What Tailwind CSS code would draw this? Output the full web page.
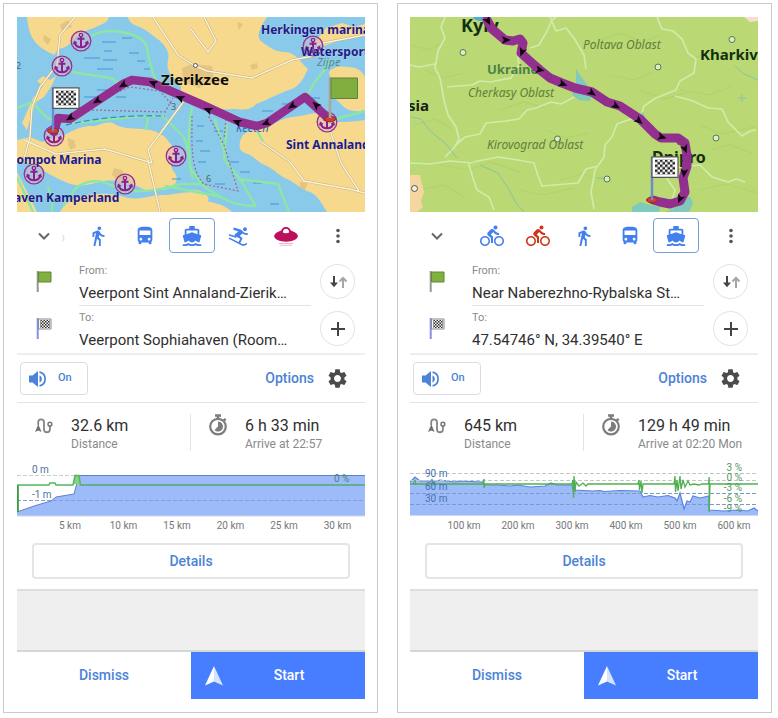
<!DOCTYPE html>
<html lang="en">
<head>
<meta charset="utf-8">
<meta name="viewport" content="width=device-width, initial-scale=1">
<title>Boat routes</title>
<script src="https://cdn.jsdelivr.net/npm/@tailwindcss/browser@4"></script>
</head>
<body class="bg-white font-[Roboto,sans-serif] text-[#303030]">

<!-- Shared icons -->
<svg class="absolute size-0" aria-hidden="true">
  <defs>
    <pattern id="check-small" width="3" height="3" patternUnits="userSpaceOnUse"><path d="M0 0h1.500v1.500H0zM1.500 1.500H3V3H1.500z" fill="#333"/></pattern>
    <pattern id="check-big" width="5" height="5" patternUnits="userSpaceOnUse"><path d="M0 0h2.500v2.500H0zM2.500 2.500H5V5H2.500z" fill="#222"/></pattern>
  </defs>
  <symbol id="walk" viewBox="0 0 24 24"><path d="M13.5 5.5c1.1 0 2-.9 2-2s-.9-2-2-2-2 .9-2 2 .9 2 2 2zM9.8 8.9L7 23h2.1l1.8-8 2.1 2v6h2v-7.5l-2.1-2 .6-3C14.8 12 16.8 13 19 13v-2c-1.9 0-3.5-1-4.3-2.4l-1-1.6c-.4-.6-1-1-1.7-1-.3 0-.5.1-.8.1L6 8.3V13h2V9.6l1.8-.7"/></symbol>
  <symbol id="bus" viewBox="0 0 24 24"><path d="M4 16c0 .88.39 1.67 1 2.22V20c0 .55.45 1 1 1h1c.55 0 1-.45 1-1v-1h8v1c0 .55.45 1 1 1h1c.55 0 1-.45 1-1v-1.78c.61-.55 1-1.34 1-2.22V6c0-3.5-3.58-4-8-4s-8 .5-8 4v10zm3.5 1c-.83 0-1.5-.67-1.5-1.5S6.67 14 7.5 14s1.5.67 1.5 1.5S8.33 17 7.5 17zm9 0c-.83 0-1.5-.67-1.5-1.5s.67-1.5 1.5-1.5 1.5.67 1.5 1.5-.67 1.5-1.5 1.5zm1.5-6H6V6h12v5z"/></symbol>
  <symbol id="boat" viewBox="0 0 24 24"><path d="M20 21c-1.39 0-2.78-.47-4-1.32-2.44 1.71-5.56 1.71-8 0C6.78 20.53 5.39 21 4 21H2v2h2c1.38 0 2.74-.35 4-.99 2.52 1.29 5.48 1.29 8 0 1.26.65 2.62.99 4 .99h2v-2h-2zM3.95 19H4c1.6 0 3.02-.88 4-2 .98 1.12 2.4 2 4 2s3.02-.88 4-2c.98 1.12 2.4 2 4 2h.05l1.89-6.68c.08-.26.06-.54-.06-.78s-.34-.42-.6-.5L20 10.62V6c0-1.1-.9-2-2-2h-3V1H9v3H6c-1.1 0-2 .9-2 2v4.62l-1.29.42c-.26.08-.48.26-.6.5s-.15.52-.06.78L3.95 19zM6 6h12v3.97L12 8 6 9.97V6z"/></symbol>
  <symbol id="bike" viewBox="0 0 24 24"><path d="M15.5 5.5c1.1 0 2-.9 2-2s-.9-2-2-2-2 .9-2 2 .9 2 2 2zM5 12c-2.8 0-5 2.2-5 5s2.2 5 5 5 5-2.2 5-5-2.2-5-5-5zm0 8.5c-1.9 0-3.5-1.6-3.5-3.5s1.6-3.5 3.5-3.5 3.5 1.6 3.5 3.5-1.6 3.5-3.5 3.5zm5.8-10l2.4-2.4.8.8c1.3 1.3 3 2.1 5.1 2.1V9c-1.5 0-2.7-.6-3.6-1.5l-1.9-1.9c-.5-.4-1-.6-1.6-.6s-1.1.2-1.4.6L7.8 8.4c-.4.4-.6.9-.6 1.4 0 .6.2 1.1.6 1.4L11 14v5h2v-6.2l-2.2-2.3zM19 12c-2.8 0-5 2.2-5 5s2.2 5 5 5 5-2.2 5-5-2.2-5-5-5zm0 8.5c-1.9 0-3.5-1.6-3.5-3.5s1.6-3.5 3.5-3.5 3.5 1.6 3.5 3.5-1.6 3.5-3.5 3.5z"/></symbol>
  <symbol id="ski" viewBox="0 0 24 24"><circle cx="18.500" cy="4.600" r="2.100"/><path d="M6.300 2.800l8.200 2.500 2.300 2.400c1 1 2.400 1.400 5 1.200v1.800c-2.900.3-4.600-.2-5.800-1.300l-3.300 2.400 3.200 2.600-2.700 5.400-1.900-.8 2-4-5.300-2.900c-.9-.5-1-1.600-.2-2.300l3.600-2.800-5.600-1.800z"/><path d="M1.700 14.600l13.100 6.600c1.800.8 3.700.6 5.200-.6M1.600 10.900l7 2.200" fill="none" stroke="currentColor" stroke-width="1.700" stroke-linecap="round"/></symbol>
  <symbol id="ufo" viewBox="0 0 24 24"><path d="M6.800 10C6.800 5.500 8.800 3 12 3s5.200 2.500 5.200 7z"/><path d="M7.500 6.500C3 7.900.2 9.800.2 12.300c0 3 5.300 5.400 11.800 5.400s11.800-2.400 11.800-5.400c0-2.500-2.800-4.400-7.300-5.800z"/><path d="M8.800 8.500c.2-2.500 1.300-3.700 3.200-3.700s3 1.200 3.200 3.700c-1.900.9-4.500.9-6.400 0z" fill="#fff"/><path d="M5 19h14v1H5zm1 1.700h12v1H6z" opacity=".3"/></symbol>
  <symbol id="gear" viewBox="0 0 24 24"><path d="M19.140 12.940c.04-.3.06-.61.06-.94 0-.32-.02-.64-.07-.94l2.030-1.580c.18-.14.23-.41.12-.61l-1.920-3.320c-.12-.22-.37-.29-.59-.22l-2.390.96c-.5-.38-1.030-.7-1.620-.94l-.36-2.540c-.04-.24-.24-.41-.48-.41h-3.840c-.24 0-.43.17-.47.41l-.36 2.540c-.59.24-1.130.57-1.620.94l-2.390-.96c-.22-.08-.47 0-.59.22L2.740 8.870c-.12.21-.08.47.12.61l2.030 1.580c-.05.3-.09.63-.09.94s.02.64.07.94l-2.030 1.580c-.18.14-.23.41-.12.61l1.920 3.320c.12.22.37.29.59.22l2.390-.96c.5.38 1.030.7 1.620.94l.36 2.540c.05.24.24.41.48.41h3.840c.24 0 .44-.17.47-.41l.36-2.540c.59-.24 1.130-.56 1.620-.94l2.390.96c.22.08.47 0 .59-.22l1.920-3.320c.12-.22.07-.47-.12-.61l-2.010-1.580zM12 15.600c-1.980 0-3.600-1.620-3.600-3.600s1.620-3.600 3.600-3.600 3.600 1.620 3.600 3.600-1.620 3.600-3.600 3.600z"/></symbol>
  <symbol id="volume" viewBox="0 0 20 18"><path d="M1 5.500v7h3.500L10 17V1L4.500 5.500z"/><path d="M11.500 5.500c1.500.6 2.300 1.900 2.300 3.500s-.8 2.900-2.300 3.500z"/><path d="M11.500 2.100c3.600.7 5.600 3.500 5.600 6.900s-2 6.200-5.600 6.900" fill="none" stroke="currentColor" stroke-width="1.700"/></symbol>
  <symbol id="chevron" viewBox="0 0 14 14"><path d="M2 4.500l5 5 5-5" fill="none" stroke="#666" stroke-width="2"/></symbol>
  <symbol id="dots" viewBox="0 0 6 16"><circle cx="3" cy="2.500" r="1.800"/><circle cx="3" cy="8" r="1.800"/><circle cx="3" cy="13.500" r="1.800"/></symbol>
  <symbol id="swap" viewBox="0 0 18 14"><path d="M5 1v9" stroke="#444" stroke-width="2"/><path d="M1 7.500h8L5 12.300z" fill="#444"/><path d="M14 13V4" stroke="#a6a6a6" stroke-width="2"/><path d="M10.500 6.500L14 3l3.500 3.500" fill="none" stroke="#a6a6a6" stroke-width="2"/></symbol>
  <symbol id="plus" viewBox="0 0 14 14"><path d="M7 0v14M0 7h14" stroke="#444" stroke-width="2"/></symbol>
  <symbol id="flag-start" viewBox="0 0 16 21"><path d="M1.700 0v21" stroke="#97958d" stroke-width="2"/><path d="M2.500 1h12.500v10H2.500z" fill="#80b040" stroke="#5b8a35"/></symbol>
  <symbol id="flag-end" viewBox="0 0 16 21"><path d="M1.700 0v21" stroke="#8490e2" stroke-width="2"/><path d="M2.500 1h12.500v10H2.500z" fill="#f6f6f6" stroke="#8b8b8b"/><path d="M4 2h10v8H4z" fill="url(#check-small)"/></symbol>
  <symbol id="distance" viewBox="0 0 18 17"><path d="M3.200 7V4.200a2.900 2.900 0 0 1 5.800 0v7.600a3 3 0 0 0 5.900 0V8" fill="none" stroke="#858585" stroke-width="1.800"/><circle cx="14.900" cy="6.200" r="1.900" fill="#fff" stroke="#777" stroke-width="1.500"/><path d="M3.300 6.200L6.600 14l-3.300-1.400L0 14z" fill="#707070"/></symbol>
  <symbol id="timer" viewBox="0 0 20 22"><path d="M7 1.500h6M10 1.500v3M15.800 4.800l1.800 1.800" fill="none" stroke="#7d7d7d" stroke-width="2.600"/><circle cx="10" cy="12.600" r="7.800" fill="#fff" stroke="#7d7d7d" stroke-width="2.200"/><path d="M10 7.600a5 5 0 1 1-3.500 8.500L10 12.600z" fill="#7d7d7d"/></symbol>
  <symbol id="navigate" viewBox="0 0 18 20"><path d="M9 0v15.500L0 19.500z" fill="#fff"/><path d="M9 0v15.500l9 4z" fill="#d5e3ff"/></symbol>
  <symbol id="anchor" viewBox="-11 -11 22 22"><circle r="9.800" fill="#d9b4ca" fill-opacity=".5" stroke="#8f3490" stroke-width="1.300"/><path d="M0-4.500V6M-3.500-2.300h7M-6.300 1.500C-5.500 5-3 6.300 0 6.300S5.500 5 6.300 1.500M-7 3.500l.6-2.500 2 1.300M7 3.500L6.400 1l-2 1.300" fill="none" stroke="#8a208c" stroke-width="2"/><circle cy="-5.900" r="1.700" fill="none" stroke="#8a208c" stroke-width="1.300"/></symbol>
  <symbol id="arrow" viewBox="-5 -5 10 10"><path d="M4.800 0L-4.200 3.900-2.200 0l-2-3.900z" fill="#130816"/></symbol>
  <symbol id="finish" viewBox="0 0 34 50"><ellipse cx="6" cy="44" rx="5.500" ry="2.700" fill="#d63c36" stroke="#86332f"/><path d="M6 1v43" stroke="#6d8bd0" stroke-width="2.400"/><path d="M6 .8h26v20.500H6z" fill="#fff" stroke="#555" stroke-width="1.200"/><path d="M0 0h20v15H0z" transform="translate(9 3.500)" fill="url(#check-big)"/></symbol>
</svg>

<main class="grid grid-cols-2 items-start gap-[19px] pt-[3px] pr-[6px] pb-[5px] pl-[3px]">

  <!-- Route 1 -->
  <section class="border border-[#c9c9c9] pt-[13px] pr-[12px] pb-[13px] pl-[13px]">
    <svg class="block h-auto w-full" viewBox="17 17 348 195" role="img" aria-label="Map of the route to Sophiahaven">
      <path fill="#89caeb" d="M17 17h348v195H17z"/>
      <g fill="#f7d98e">
        <path d="M27 17c1 10 3 20 10 27 5 5 11 8 17 11 2-3 4-6 8-7 6-1 8-5 12-9 6-8 14-8 24-13 5-2 10-4 11-9z"/>
        <path d="M128 17c1 6 6 8 12 10 8 4 12 8 19 13 7 7 11 12 9 20-2 9 2 15 8 20 3 4 6 6 5 10-3 5 2 9 10 13 12 5 24 7 42 6 12 1 18 1 23-5 8-3 18-8 30-13 14-3 18-14 22-22-10-9-13-18-25-17-9-1-14-5-21-10-7-5-2-14 5-25z"/>
        <path d="M329 72c4-6 12-6 20-5 7 1 12 2 16 10v33c-10 3-19 0-23-5-5-5-9-7-9-14z"/>
        <path d="M326 28l16-5 12 4 11-3v11l-24 5-17 6-9-4z"/>
        <path d="M243 135c8-6 21-6 29-10 7-5 16-8 28-9 9-1 15-5 22-1 11 10 28 7 43 5v92h-38c-5-7-8-16-17-20-10-3-15-10-23-13-9-4-12-9-20-13-11-4-12-10-22-13-8-3-6-12-2-18z"/>
        <path d="M17 140l13-3 12 5 15-5c14-3 17-10 33-11 10 1 12-5 23-3 8 6 18 5 29 6 14 1 22 5 27 13 7 7 7 15 3 22-3 6 8 10 4 18-5 9-15 8-23 8-12 2-15-7-28-7-10-3-16-3-25-1-10 2-17 5-30 2-10-4-24-11-31-17-7-4-15-5-22-5z"/>
        <path d="M60 212c4-8 12-14 24-16 17-4 31-2 44 2 15 2 24-4 39-3 14-2 27-6 35 4 10 5 20 3 30 13z"/>
        <path d="M190 190c8-1 15 2 18 7s-6 8-18 7zM27 130l-5-7 11-25 10-12-6-5 6-5 7 4 6-4-4 9-8 12-8 5-5 15z"/>
        <path d="M17 212v-40l8 16 12 24z"/>
      </g>
      <g fill="#dfbf7d" opacity=".8"><path d="M60 25l8-5 4 7-10 4zM44 35l7 4-3 6-5-5zM68 138l6 2 2 7-5 3-3-5zM114 168l8 2 4 8-8 3-6-6zM250 65l7-2 1 5-6 2zM237 22l6 2-4 6zM300 182l8 1-3 7-5-2zM182 68l10-4 20 2 2 14-15 8-16-6z"/></g>
      <g fill="none" stroke="#2f8ccc" stroke-width=".8"><path d="M102 42h14M122 38h10M84 58h16M103 60h14M97 69h16M129 53h10M137 61h8M104 51h8M144 69h6M197 126h7M214 131h9M196 141h7M200 151h10M198 162h8M230 162h9M215 184h10M240 172h10M253 183h9M172 179h9M97 90h12M84 97h12M116 97h10M262 111h11M282 104h10M310 98h10M270 204h9"/></g>
      <g fill="none" stroke="#8be7a2" stroke-width="2.400" stroke-linejoin="round">
        <path d="M90 37c8-6 18-7 31-5 13 2 24 6 26 16 3 16 6 27 9 32M72 72c12 3 28 3 41 7 5 3 6 6 8 8M17 108l15-6 15 16 24 5c38-2 61-8 92-7l20 20c7 13 5 25 10 43M63 206l13-18c10-8 24-9 34-3l25 6c15 1 30-3 46-7l20 0M33 212l-16-35M52 212c2-8-2-16-4-26M192 107c-4 20-4 36-2 60l13 19c18 12 30 20 52 20M227 124l-3 35 18 23 14 25M238 179l40 5 11 28M215 119l11 38M257 131l6 10M308 94c8-17 16-20 22-34M336 119l29-8M165 186l57 11M148 117l-2 13"/>
      </g>
      <path d="M66 125c34-8 66-10 99-9" fill="none" stroke="#3590cc" stroke-width="1.300" stroke-dasharray="6 3"/>
      <g fill="none" stroke="#a26a9a" stroke-width="1.300" stroke-dasharray="2 2"><path d="M92 110l73 2 8-14M105 97l25-10 30 4 12 14M192 116c0 28-2 54 12 68l34 7-14-46-16-30M226 119l-2 20"/></g>
      <path d="M75 17L60 35l-3 30-17 22-8 20-2 30-6 22M24 140l32 14 49-5 47 14-4-13 36-49M148 160l12 52M153 17l25 38 17 11M190 28l18 24 8-11-12-24M195 66l12 5 45 7 40-18 22-4M313 45l52-10M330 130l11 33 18 28M260 141l30 21 14 19 45 8 16 4" fill="none" stroke="#bdae8b" stroke-width="2.400"/>
      <path d="M75 17L60 35l-3 30-17 22-8 20-2 30-6 22M24 140l32 14 49-5 47 14-4-13 36-49M148 160l12 52M153 17l25 38 17 11M190 28l18 24 8-11-12-24M195 66l12 5 45 7 40-18 22-4M313 45l52-10M330 130l11 33 18 28M260 141l30 21 14 19 45 8 16 4" fill="none" stroke="#fff3cd" stroke-width="1.400"/>
      <g class="font-['Noto_Sans',sans-serif]" fill="#4c6275" font-size="9"><text x="171" y="110">3</text><text x="206" y="182">6</text><text x="16" y="69">2</text><text x="317" y="66" font-size="11" font-style="italic" fill="#55888d">Zijpe</text><text x="236" y="132" font-size="11" font-style="italic" fill="#2e68ad">Keeten</text></g>
      <g><use href="#anchor" x="70" y="30" width="22" height="22"/><use href="#anchor" x="51" y="55" width="22" height="22"/><use href="#anchor" x="43" y="125" width="22" height="22"/><use href="#anchor" x="23" y="163" width="22" height="22"/><use href="#anchor" x="114" y="173" width="22" height="22"/><use href="#anchor" x="165" y="145" width="22" height="22"/><use href="#anchor" x="302" y="35" width="22" height="22"/><use href="#anchor" x="316" y="111" width="22" height="22"/></g>
      <circle cx="195.500" cy="65.500" r="2" fill="#fff" stroke="#555"/>
      <path d="M54 132L58 118 70 119 123 84 132 80 150 82 205 106 240 122 257 126 267 123 305 97 328 118" fill="none" stroke="#93308f" stroke-width="8.500" stroke-linejoin="round" stroke-linecap="round"/>
      <g>
        <use href="#arrow" x="-5" y="-5" width="10" height="10" transform="translate(70 118) rotate(148)"/><use href="#arrow" x="-5" y="-5" width="10" height="10" transform="translate(97 101) rotate(148)"/><use href="#arrow" x="-5" y="-5" width="10" height="10" transform="translate(123 85) rotate(150)"/><use href="#arrow" x="-5" y="-5" width="10" height="10" transform="translate(153 83) rotate(205)"/><use href="#arrow" x="-5" y="-5" width="10" height="10" transform="translate(180 98) rotate(205)"/><use href="#arrow" x="-5" y="-5" width="10" height="10" transform="translate(208 110) rotate(203)"/><use href="#arrow" x="-5" y="-5" width="10" height="10" transform="translate(237 122) rotate(203)"/><use href="#arrow" x="-5" y="-5" width="10" height="10" transform="translate(266 123) rotate(160)"/><use href="#arrow" x="-5" y="-5" width="10" height="10" transform="translate(292 106) rotate(146)"/><use href="#arrow" x="-5" y="-5" width="10" height="10" transform="translate(316 105) rotate(222)"/>
      </g>
      <g class="font-['Noto_Sans',sans-serif]" font-weight="700" stroke-linejoin="round" paint-order="stroke">
        <text x="161" y="85" font-size="15" fill="#0c0c0c" stroke="#f7d98e" stroke-opacity=".5">Zierikzee</text>
        <g font-size="12" fill="#1d1a90" stroke="#f7e3b0" stroke-opacity=".4"><text x="261" y="34">Herkingen marina</text><text x="301" y="56">Watersport</text><text x="286" y="149">Sint Annaland</text><text x="9" y="164">oompot Marina</text><text x="14" y="202">aven Kamperland</text></g>
      </g>
      <use href="#finish" x="47" y="87" width="34" height="50"/>
      <ellipse cx="330" cy="119" rx="5.500" ry="2.800" fill="#d63c36" stroke="#86332f"/><path d="M330 77v41" stroke="#a9a69a" stroke-width="2.600"/><path d="M331 78h26.500v20.500H331z" fill="#80ae3f" stroke="#5d8242"/>
    </svg>

    <div class="flex h-[47px] items-center">
      <button type="button" aria-label="Collapse" class="w-10 pl-5"><svg class="size-[14px]"><use href="#chevron"/></svg></button>
      <svg class="h-4 w-[18px]" viewBox="0 0 18 16" aria-hidden="true"><path d="M5 6.500c2.500 2 2.500 5 0 7" fill="none" stroke="#e5cfc5"/></svg>
      <div class="flex flex-1 gap-px text-[#437fed]">
        <button type="button" aria-label="Walk" class="flex h-[35px] w-[46px] items-center justify-center"><svg class="size-[22px] fill-current"><use href="#walk"/></svg></button>
        <button type="button" aria-label="Bus" class="flex h-[35px] w-[46px] items-center justify-center"><svg class="size-[22px] fill-current"><use href="#bus"/></svg></button>
        <button type="button" aria-label="Boat" aria-pressed="true" class="flex h-[35px] w-[46px] items-center justify-center rounded border border-[#74a1d4]"><svg class="size-[22px] fill-current"><use href="#boat"/></svg></button>
        <button type="button" aria-label="Ski" class="flex h-[35px] w-[46px] items-center justify-center"><svg class="size-[22px] fill-current"><use href="#ski"/></svg></button>
        <button type="button" aria-label="UFO" class="flex h-[35px] w-[46px] items-center justify-center text-[#bd105c]"><svg class="size-6 fill-current"><use href="#ufo"/></svg></button>
      </div>
      <button type="button" aria-label="More" class="flex w-[54px] justify-center"><svg class="h-4 w-[6px] fill-[#555]"><use href="#dots"/></svg></button>
    </div>

    <div class="border-b-2 border-[#eeeeee]">
      <div class="flex h-[47px]">
        <div class="w-[62px] pt-3 pl-[19px]"><svg class="h-[21px] w-4"><use href="#flag-start"/></svg></div>
        <button type="button" class="flex min-w-0 flex-1 flex-col border-b border-[#e4e4e4] pt-1 text-left"><span class="block text-[11px] leading-4 text-[#8a8a8a]">From:</span><span class="block w-full truncate pt-1 text-[15px] leading-[20px]">Veerpont Sint Annaland-Zierik…</span></button>
        <div class="flex w-[54px] justify-end pt-[5px] pr-[10px]"><button type="button" aria-label="Swap" class="flex size-[35px] items-center justify-center rounded-full border border-[#e2e2e2]"><svg class="h-[14px] w-[18px]"><use href="#swap"/></svg></button></div>
      </div>
      <div class="flex h-[47px]">
        <div class="w-[62px] pt-3 pl-[19px]"><svg class="h-[21px] w-4"><use href="#flag-end"/></svg></div>
        <button type="button" class="flex min-w-0 flex-1 flex-col pt-1 text-left"><span class="block text-[11px] leading-4 text-[#8a8a8a]">To:</span><span class="block w-full truncate pt-1 text-[15px] leading-[20px]">Veerpont Sophiahaven (Room…</span></button>
        <div class="flex w-[54px] justify-end pt-[5px] pr-[10px]"><button type="button" aria-label="Add" class="flex size-[35px] items-center justify-center rounded-full border border-[#e2e2e2]"><svg class="size-[14px]"><use href="#plus"/></svg></button></div>
      </div>
    </div>

    <div class="flex h-[48px] items-center border-b border-[#e4e4e4] pr-[16px] pl-[3px] text-[#4b83d6]">
      <button type="button" class="flex h-[33px] w-[68px] items-center gap-[10px] rounded border border-[#d9dde3] pl-[7px] text-[11px] font-medium"><svg class="h-[18px] w-5 fill-current"><use href="#volume"/></svg>On</button>
      <button type="button" class="ml-auto flex items-center gap-3 text-[14px] font-medium">Options<svg class="size-[23px] fill-[#4c4c4c]"><use href="#gear"/></svg></button>
    </div>

    <div class="flex h-[59px] pt-[11px]">
      <div class="flex h-[37px] w-1/2 border-r border-[#e4e4e4]">
        <svg class="mt-1 ml-[18px] h-[17px] w-[18px]"><use href="#distance"/></svg>
        <div class="pl-[18px]"><p class="text-[16px] leading-[24px]">32.6 km</p><p class="text-[12px] leading-[12px] text-[#8a8a8a]">Distance</p></div>
      </div>
      <div class="flex h-[37px] w-1/2">
        <svg class="ml-[17px] h-[22px] w-5"><use href="#timer"/></svg>
        <div class="pl-[17px]"><p class="text-[16px] leading-[24px]">6 h 33 min</p><p class="text-[12px] leading-[12px] whitespace-nowrap text-[#8a8a8a]">Arrive at 22:57</p></div>
      </div>
    </div>

    <svg class="block h-auto w-full" viewBox="17 462 348 71" role="img" aria-label="Elevation profile">
      <path d="M17 512l17-6 17-5 5-4 18-3 5-18.500h286V516H17z" fill="#9ebbf9"/>
      <path d="M17 512l17-6 17-5 5-4 18-3 5-18.500h286" fill="none" stroke="#5b82ce"/>
      <path d="M17 475.500h60" stroke="#ccc" stroke-dasharray="4 2"/><path d="M17 500.500h348" stroke="#84a0dc" stroke-dasharray="4 2"/><path d="M17 516h348" stroke="#ccd6ec"/>
      <path d="M73 484l2-8.500h5v9z" fill="#86d184"/>
      <path d="M18 512v-27h31l1-2h5l1 2h17l2-9.500h4l1.500 9.500H365" fill="none" stroke="#56b55c" stroke-width="1.500"/><path d="M80 485h285" stroke="#63a997" stroke-width="1.500"/><path d="M17.800 485v27" stroke="#3d9c43" stroke-width="1.600"/>
      <g class="font-[Roboto,sans-serif]" font-size="10"><text x="32" y="473" fill="#4e729e">0 m</text><text x="32" y="498" fill="#4e729e">-1 m</text><text x="334" y="482" fill="#3b8b77">0 %</text>
      <g fill="#777" text-anchor="middle"><text x="70" y="529">5 km</text><text x="123.500" y="529">10 km</text><text x="177" y="529">15 km</text><text x="230.500" y="529">20 km</text><text x="284" y="529">25 km</text><text x="337.500" y="529">30 km</text></g></g>
    </svg>

    <div class="border-b-2 border-[#dedede] px-[15px] pt-[10px] pb-[10px]"><button type="button" class="h-[36px] w-full rounded border-2 border-[#e5e5e5] text-[14px] font-medium text-[#4b83d6]">Details</button></div>
    <div class="h-[61px] border-b-2 border-[#d6d6d6] bg-[#efefef]"></div>
    <div class="grid h-[47px] grid-cols-2 text-[14px] font-medium">
      <button type="button" class="text-[#4b83d6]">Dismiss</button>
      <button type="button" class="flex items-center bg-[#477eff] pl-[14px] text-white"><svg class="h-[20px] w-[18px]"><use href="#navigate"/></svg><span class="flex-1 pr-[10px]">Start</span></button>
    </div>
  </section>

  <!-- Route 2 -->
  <section class="border border-[#c9c9c9] pt-[13px] pr-[13px] pb-[13px] pl-[12px]">
    <svg class="block h-auto w-full" viewBox="410 17 348 195" role="img" aria-label="Map of the route from Kyiv along the Dnipro">
      <path fill="#bad873" d="M410 17h348v195H410z"/>
      <g fill="none" stroke="#a9cb65" stroke-width="1.200" opacity=".45"><path d="M410 45l20 5 15-9M425 70l18 8 20-5M415 125l20-6 16 9M440 165l28 5 22-8 30 10M500 110l24-8 22 6M545 130l20 8 24-5M600 40l20-7 23 9 20-8M610 75l24 5 20-8M690 60l20-9 30 7M680 90l30 5 22-9M700 125l22 9 36-8M710 150l20-5 22 8M560 180l22-6 32 8M640 90l24 9 22-6M420 190l24-5 20 12M520 190l22 5 32-7M700 190l26-6 32 9"/></g>
      <path d="M410 175l10 0 2 9 2 8-3 9 2 6-6 5h-7z" fill="#f5d6a0"/><path d="M744 17l6 5 8-1v-4z" fill="#f5dfc8"/>
      <g fill="none" stroke="#d0ecaa" stroke-width="1.700" stroke-linejoin="round">
        <path d="M445 17l-4 10 4 11-7 13-3 17 5 10 4 22 4 15 8 12 3 12-5 9-9 9 M410 65l9 2 16-3M447 87l11-1 14-1 8-4 10 1 21-4 8-13-2-14 8-4M530 48l9-3 7-12 6-13 4-3M550 17l6 14 10-3 8 10 10 17 2 14M456 145l9-8 15-3 6-11 20-2 13-2 8-9 9-2 15-6 10 2 15-8 20-5"/>
        <path d="M410 163l20 1 20-3 23 2M468 162l5 16 4 12 12 7 5 13M473 162l25-5 20 3 16 3 4 13 4 10 12-1 24-2 8-14 12-3M657 17l5 12 11 2 9 8 6 14 8 6-2 14-14 8-4 9-20 8-12 8-4 14M675 96l18 5 15 7 14 1 6 13 14 14 8-5 6-1M634 118l-17 6-5 13-7 8-1 12-9 13-4 22 3 17M672 168l28-3 12 12 16 5 8-3 9 3M665 176l10 14-3 10"/>
      </g>
      <g fill="none" stroke="#89c5a0"><path d="M411 117l10 2 9 12 15 12 12 15M480 165l18 8 10 15 8 15 8 9M576 70l5 17M735 66l9 8 14 6M738 98h8M742 94v8M597 178h8"/></g>
      <g fill="#7fcaba"><path d="M576 69l4 6 8 11-5 5-7-5zM574 90l18 4-2 7-11-1-7-5zM637 117l6-5 3 8zM632 207l8-5 10 3 10 2-1 6h-27zM690 196l3 7-4 9h-24l12-5z"/></g>
      <ellipse cx="481" cy="17" rx="8" ry="4" fill="#55a9d7"/>
      <g fill="#ddeec1" stroke="#4f7d58"><circle cx="463" cy="52.500" r="3"/><circle cx="658" cy="67" r="3"/><circle cx="732" cy="39.500" r="3"/><circle cx="716" cy="138" r="3"/><circle cx="607" cy="179" r="3"/><circle cx="557.500" cy="139" r="3"/><circle cx="414.500" cy="188.500" r="3" stroke="#555" fill="#f3efe3"/></g>
      <g class="font-['Noto_Sans',sans-serif]">
        <g font-size="12" font-style="italic" fill="#5f803b"><text x="583" y="49">Poltava Oblast</text><text x="468" y="97">Cherkasy Oblast</text><text x="487" y="149">Kirovograd Oblast</text></g>
        <g font-weight="700" fill="#12300f"><text x="461" y="32" font-size="18">Kyiv</text><text x="700" y="60" font-size="15">Kharkiv</text><text x="408" y="111" font-size="15" fill="#171f12">sia</text><text x="652" y="163" font-size="16">Dnipro</text><text x="487" y="74" font-size="13" fill="#4c8148">Ukraine</text></g>
      </g>
      <path d="M487 20L492 29 505 40 513 41 520 39 523 43 521 53 532 63 540 70 550 78 562 83 575 88 592 92 607 102 620 106 640 119 655 134 661 138 678 138 685 143 687 155 687 166 683 178 685 192 680 201 670 204 660 202 653 200" fill="none" stroke="#93308f" stroke-width="9" stroke-linejoin="round" stroke-linecap="round"/>
      <g fill="none" stroke="#823080" stroke-width=".8"><circle cx="549" cy="77" r="3"/><circle cx="607" cy="102" r="3.500"/><circle cx="680" cy="142" r="3"/><circle cx="686" cy="158" r="3.500"/><circle cx="684" cy="183" r="3.500"/></g>
      <g>
        <use href="#arrow" x="-5" y="-5" width="10" height="10" transform="translate(488 21) rotate(60)"/><use href="#arrow" x="-5" y="-5" width="10" height="10" transform="translate(506 40) rotate(0)"/><use href="#arrow" x="-5" y="-5" width="10" height="10" transform="translate(522 52) rotate(110)"/><use href="#arrow" x="-5" y="-5" width="10" height="10" transform="translate(540 70) rotate(10)"/><use href="#arrow" x="-5" y="-5" width="10" height="10" transform="translate(563 84) rotate(20)"/><use href="#arrow" x="-5" y="-5" width="10" height="10" transform="translate(592 93) rotate(35)"/><use href="#arrow" x="-5" y="-5" width="10" height="10" transform="translate(616 106) rotate(30)"/><use href="#arrow" x="-5" y="-5" width="10" height="10" transform="translate(639 121) rotate(40)"/><use href="#arrow" x="-5" y="-5" width="10" height="10" transform="translate(662 137) rotate(15)"/><use href="#arrow" x="-5" y="-5" width="10" height="10" transform="translate(685 149) rotate(70)"/><use href="#arrow" x="-5" y="-5" width="10" height="10" transform="translate(684 173) rotate(95)"/><use href="#arrow" x="-5" y="-5" width="10" height="10" transform="translate(680 199) rotate(115)"/>
      </g>
      <use href="#finish" x="646" y="156" width="34" height="50"/>
    </svg>

    <div class="flex h-[47px] items-center">
      <button type="button" aria-label="Collapse" class="w-[59px] pl-5"><svg class="size-[14px]"><use href="#chevron"/></svg></button>
      <div class="flex flex-1 text-[#437fed]">
        <button type="button" aria-label="Bicycle" class="flex h-[35px] w-[46px] items-center justify-center"><svg class="size-6 fill-current"><use href="#bike"/></svg></button>
        <button type="button" aria-label="Road bicycle" class="flex h-[35px] w-[46px] items-center justify-center text-[#cd3418]"><svg class="size-6 fill-current"><use href="#bike"/></svg></button>
        <button type="button" aria-label="Walk" class="flex h-[35px] w-[46px] items-center justify-center"><svg class="size-[22px] fill-current"><use href="#walk"/></svg></button>
        <button type="button" aria-label="Bus" class="flex h-[35px] w-[46px] items-center justify-center"><svg class="size-[22px] fill-current"><use href="#bus"/></svg></button>
        <button type="button" aria-label="Boat" aria-pressed="true" class="flex h-[35px] w-[46px] items-center justify-center rounded border border-[#74a1d4]"><svg class="size-[22px] fill-current"><use href="#boat"/></svg></button>
      </div>
      <button type="button" aria-label="More" class="flex w-[54px] justify-center"><svg class="h-4 w-[6px] fill-[#555]"><use href="#dots"/></svg></button>
    </div>

    <div class="border-b-2 border-[#eeeeee]">
      <div class="flex h-[47px]">
        <div class="w-[62px] pt-3 pl-[19px]"><svg class="h-[21px] w-4"><use href="#flag-start"/></svg></div>
        <button type="button" class="flex min-w-0 flex-1 flex-col border-b border-[#e4e4e4] pt-1 text-left"><span class="block text-[11px] leading-4 text-[#8a8a8a]">From:</span><span class="block w-full truncate pt-1 text-[15px] leading-[20px]">Near Naberezhno-Rybalska St…</span></button>
        <div class="flex w-[54px] justify-end pt-[5px] pr-[10px]"><button type="button" aria-label="Swap" class="flex size-[35px] items-center justify-center rounded-full border border-[#e2e2e2]"><svg class="h-[14px] w-[18px]"><use href="#swap"/></svg></button></div>
      </div>
      <div class="flex h-[47px]">
        <div class="w-[62px] pt-3 pl-[19px]"><svg class="h-[21px] w-4"><use href="#flag-end"/></svg></div>
        <button type="button" class="flex min-w-0 flex-1 flex-col pt-1 text-left"><span class="block text-[11px] leading-4 text-[#8a8a8a]">To:</span><span class="block w-full truncate pt-1 text-[15px] leading-[20px]">47.54746° N, 34.39540° E</span></button>
        <div class="flex w-[54px] justify-end pt-[5px] pr-[10px]"><button type="button" aria-label="Add" class="flex size-[35px] items-center justify-center rounded-full border border-[#e2e2e2]"><svg class="size-[14px]"><use href="#plus"/></svg></button></div>
      </div>
    </div>

    <div class="flex h-[48px] items-center border-b border-[#e4e4e4] pr-[16px] pl-[3px] text-[#4b83d6]">
      <button type="button" class="flex h-[33px] w-[68px] items-center gap-[10px] rounded border border-[#d9dde3] pl-[7px] text-[11px] font-medium"><svg class="h-[18px] w-5 fill-current"><use href="#volume"/></svg>On</button>
      <button type="button" class="ml-auto flex items-center gap-3 text-[14px] font-medium">Options<svg class="size-[23px] fill-[#4c4c4c]"><use href="#gear"/></svg></button>
    </div>

    <div class="flex h-[59px] pt-[11px]">
      <div class="flex h-[37px] w-1/2 border-r border-[#e4e4e4]">
        <svg class="mt-1 ml-[18px] h-[17px] w-[18px]"><use href="#distance"/></svg>
        <div class="pl-[18px]"><p class="text-[16px] leading-[24px]">645 km</p><p class="text-[12px] leading-[12px] text-[#8a8a8a]">Distance</p></div>
      </div>
      <div class="flex h-[37px] w-1/2">
        <svg class="ml-[17px] h-[22px] w-5"><use href="#timer"/></svg>
        <div class="pl-[17px]"><p class="text-[16px] leading-[24px]">129 h 49 min</p><p class="text-[12px] leading-[12px] whitespace-nowrap text-[#8a8a8a]">Arrive at 02:20 Mon</p></div>
      </div>
    </div>

    <svg class="block h-auto w-full" viewBox="410 462 348 71" role="img" aria-label="Elevation profile">
      <path d="M410 482L415 477 420 481 436 481 440 480 455 482 458 481 483 482 484 485 498 485 510 486 518 485 530 487 545 486 551 483 557 485 572 485 573 490 593 491 600 490.500 604 491.500 620 490.500 640 491 643 497 650 495.500 658 497 668 495.500 675 498 677 501 680 493 684 509 687 501 690 502 693 496 700 498 709 496 709 510 724 511 738 510 748 511 754 508 758 511V516H410z" fill="#9ebbf9"/>
      <path d="M410 482L415 477 420 481 436 481 440 480 455 482 458 481 483 482 484 485 498 485 510 486 518 485 530 487 545 486 551 483 557 485 572 485 573 490 593 491 600 490.500 604 491.500 620 490.500 640 491 643 497 650 495.500 658 497 668 495.500 675 498 677 501 680 493 684 509 687 501 690 502 693 496 700 498 709 496 709 510 724 511 738 510 748 511 754 508 758 511" fill="none" stroke="#5685dc" stroke-width="1.200"/>
      <g stroke-dasharray="4 2"><path d="M410 473.500h348M410 480.500h348" stroke="#c6c6c6"/><path d="M410 493.500h348M410 504.500h348" stroke="#7c9aca"/></g><path d="M410 515.500h348" stroke="#ccd6ec"/>
      <path d="M410 484H483L484 479V488L485 484H572L573 480 573.500 498 574 476 575 492 576 482 579 486 583 483 586 486 588 484H638L639 480 639.500 490 641 481 642 493 643 484H674L675 476 675.500 492 677 480 678 491 680 476 681 489 683 480 685 487 688 481 690 485 694 484 699 485 702 484H708.500L709.200 477V512L710 484H758" fill="none" stroke="#4eb050" stroke-width="1.300"/>
      <path d="M413 484l2-4 1 5M429 485l3-6 2 7M432 484h3" stroke="#4f9b9b" fill="none"/>
      <g class="font-[Roboto,sans-serif]" font-size="10"><g fill="#4570b0"><text x="425" y="477">90 m</text><text x="425" y="490">60 m</text><text x="425" y="502">30 m</text></g>
      <g fill="#549661" text-anchor="end"><text x="742" y="471">3 %</text><text x="742" y="481">0 %</text><text x="742" y="491">-3 %</text><text x="742" y="502">-6 %</text><text x="742" y="512">-9 %</text></g>
      <g fill="#777" text-anchor="middle"><text x="464" y="529">100 km</text><text x="518" y="529">200 km</text><text x="572" y="529">300 km</text><text x="626" y="529">400 km</text><text x="680" y="529">500 km</text><text x="734" y="529">600 km</text></g></g>
    </svg>

    <div class="border-b-2 border-[#dedede] px-[15px] pt-[10px] pb-[10px]"><button type="button" class="h-[36px] w-full rounded border-2 border-[#e5e5e5] text-[14px] font-medium text-[#4b83d6]">Details</button></div>
    <div class="h-[61px] border-b-2 border-[#d6d6d6] bg-[#efefef]"></div>
    <div class="grid h-[47px] grid-cols-2 text-[14px] font-medium">
      <button type="button" class="text-[#4b83d6]">Dismiss</button>
      <button type="button" class="flex items-center bg-[#477eff] pl-[14px] text-white"><svg class="h-[20px] w-[18px]"><use href="#navigate"/></svg><span class="flex-1 pr-[10px]">Start</span></button>
    </div>
  </section>
</main>
</body>
</html>
